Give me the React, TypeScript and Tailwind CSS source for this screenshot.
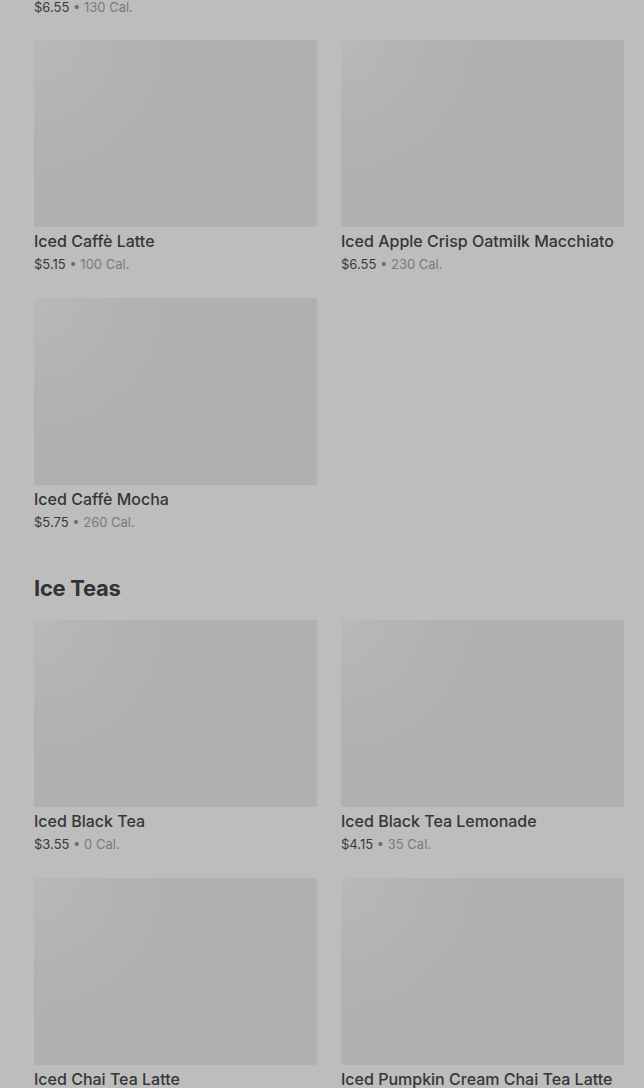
import React from "react";

type Item = { name: string; price: string; cal: string };

const Card = ({ item }: { item: Item }) => (
  <div className="flex flex-col">
    <div className="h-[187px] rounded-[2px] bg-[radial-gradient(circle_at_0%_0%,#b9b9b9_0px,#b4b4b4_60px,#b0b0b0_140px,#b0b0b0_100%)]" />
    <div className="mt-[3px] text-[16px] leading-[22px] font-medium text-[#363636] whitespace-nowrap">
      {item.name}
    </div>
    <div className="mt-[3px] text-[13px] leading-[18px] whitespace-nowrap">
      <span className="text-[#3a3a3a]">{item.price}</span>
      <span className="text-[#6e6e6e]"> • </span>
      <span className="text-[#7a7a7a]">{item.cal}</span>
    </div>
  </div>
);

const Grid = ({ items }: { items: Item[] }) => (
  <div className="grid grid-cols-2 gap-x-[24px] gap-y-[25px]">
    {items.map((it) => (
      <Card key={it.name} item={it} />
    ))}
  </div>
);

export default function App() {
  const coffee: Item[] = [
    { name: "Iced Caffè Latte", price: "$5.15", cal: "100 Cal." },
    { name: "Iced Apple Crisp Oatmilk Macchiato", price: "$6.55", cal: "230 Cal." },
    { name: "Iced Caffè Mocha", price: "$5.75", cal: "260 Cal." },
  ];
  const teas: Item[] = [
    { name: "Iced Black Tea", price: "$3.55", cal: "0 Cal." },
    { name: "Iced Black Tea Lemonade", price: "$4.15", cal: "35 Cal." },
    { name: "Iced Chai Tea Latte", price: "$5.45", cal: "240 Cal." },
    { name: "Iced Pumpkin Cream Chai Tea Latte", price: "$6.45", cal: "460 Cal." },
  ];
  return (
    <div
      className="w-[644px] h-[1088px] overflow-hidden bg-[#bdbdbd] pl-[34px] pr-[20px]"
      style={{ fontFamily: "Inter, 'Noto Sans', sans-serif" }}
    >
      <div className="mt-[-2px] text-[13px] leading-[18px] whitespace-nowrap">
        <span className="text-[#3a3a3a]">$6.55</span>
        <span className="text-[#6e6e6e]"> • </span>
        <span className="text-[#7a7a7a]">130 Cal.</span>
      </div>
      <div className="mt-[24px]">
        <Grid items={coffee} />
      </div>
      <h2 className="mt-[42px] mb-[17px] text-[22px] leading-[30px] font-bold text-[#333333] tracking-[-0.3px]">
        Ice Teas
      </h2>
      <Grid items={teas} />
    </div>
  );
}
